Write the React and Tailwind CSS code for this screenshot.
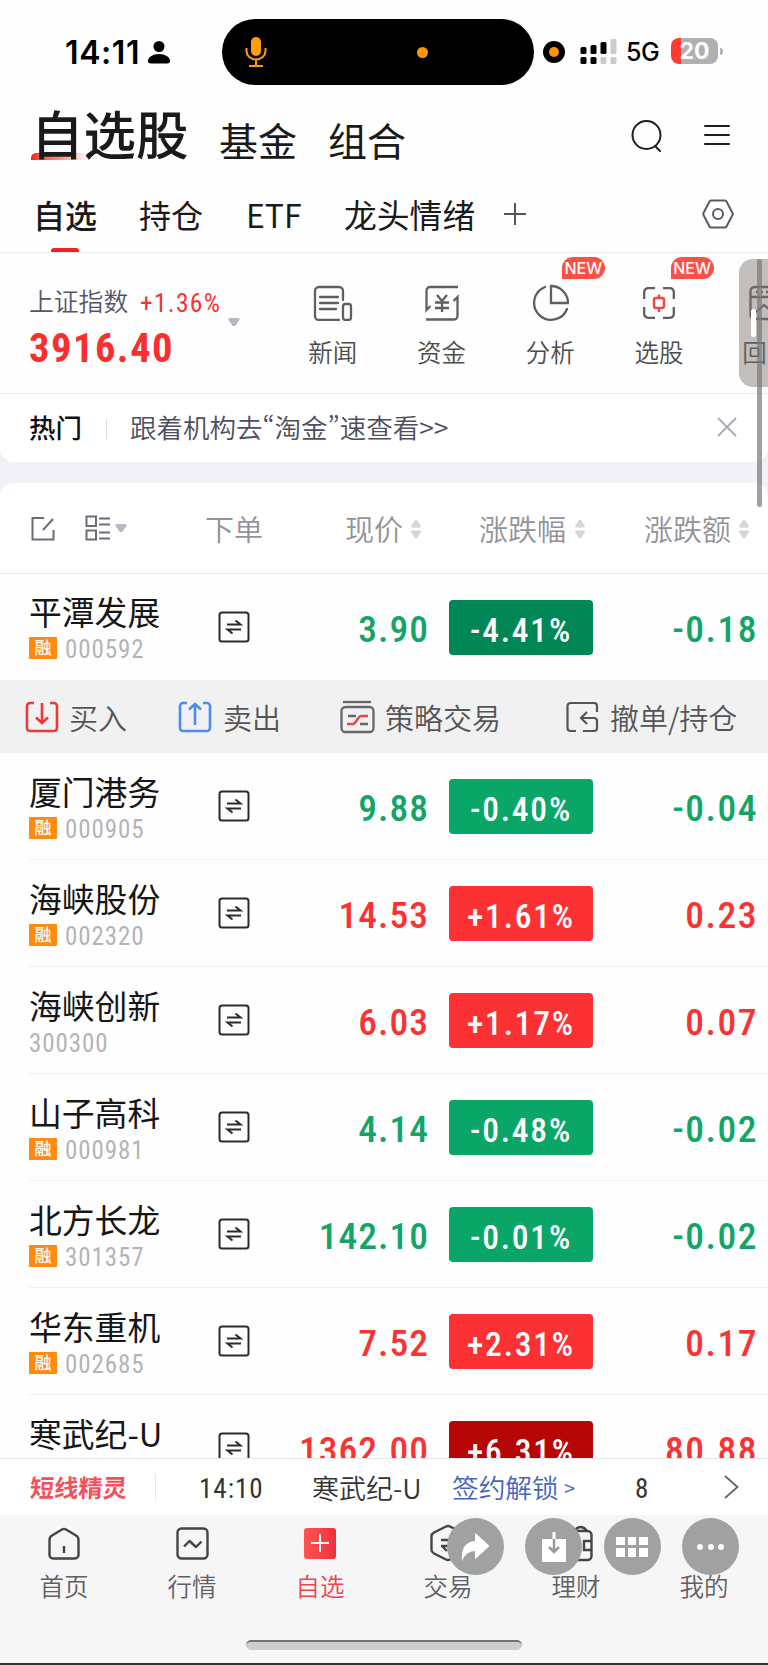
import { X } from 'lucide-react'

const NUM = "font-['Roboto','Noto_Sans_CJK_SC',sans-serif] font-stretch-semi-condensed"

const STOCKS = [
  { name: '厦门港务', code: '000905', margin: true, price: '9.88', pct: '-0.40%', diff: '-0.04' },
  { name: '海峡股份', code: '002320', margin: true, price: '14.53', pct: '+1.61%', diff: '0.23' },
  { name: '海峡创新', code: '300300', margin: false, price: '6.03', pct: '+1.17%', diff: '0.07' },
  { name: '山子高科', code: '000981', margin: true, price: '4.14', pct: '-0.48%', diff: '-0.02' },
  { name: '北方长龙', code: '301357', margin: true, price: '142.10', pct: '-0.01%', diff: '-0.02' },
  { name: '华东重机', code: '002685', margin: true, price: '7.52', pct: '+2.31%', diff: '0.17' },
]

// last row, cut by the flash bar
const LAST = { name: '寒武纪-U', price: '1362.00', pct: '+6.31%', diff: '80.88', tone: 'bg-[#b60606]' }

function Svg({ w, h, children, className = '', stroke = '#5f5f63', sw = 2 }) {
  return (
    <svg
      width={w}
      height={h}
      viewBox={`0 0 ${w} ${h}`}
      fill="none"
      stroke={stroke}
      strokeWidth={sw}
      className={`shrink-0 ${className}`}
    >
      {children}
    </svg>
  )
}

function StatusBar() {
  return (
    <div className="h-[104px] flex items-center pl-[65px]">
      <span className="w-[83px] pt-[2px] font-['Inter'] text-[32px] leading-none font-semibold tracking-[0.6px] text-black">14:11</span>
      <Svg w={22} h={23} stroke="none">
        <circle cx="11" cy="5.5" r="5.5" fill="#000" />
        <path d="M0 20C0 16 5 13 11 13S22 16 22 20Q22 22.500 19 22.500H3Q0 22.500 0 20Z" fill="#000" />
      </Svg>
      <div className="ml-[51.500px] w-[312.500px] h-[66px] rounded-full bg-black flex items-center pl-[23px]">
        <Svg w={22} h={32} stroke="#ff9d0a" sw={2}>
          <rect x="6" y="1" width="10" height="19" rx="5" fill="#ff9d0a" stroke="none" />
          <path d="M1.500 12v3a9.500 8.500 0 0 0 19 0v-3M11 24v5M4 30h14" />
        </Svg>
        <span className="ml-[150px] w-[11px] h-[11px] rounded-full bg-[#ff9500]" />
      </div>
      <span className="ml-[9px] w-[22px] h-[22px] rounded-full bg-black flex items-center justify-center">
        <span className="w-[10px] h-[10px] rounded-full bg-[#ff9500]" />
      </span>
      <Svg w={38} h={26} stroke="none" className="ml-[15px] -mt-[3px]">
        <g fill="#000">
          <rect x="0.500" y="9" width="6" height="7" rx="1.500" />
          <rect x="10.500" y="7" width="6" height="9" rx="1.500" />
          <rect x="20.500" y="4" width="6" height="12" rx="1.500" />
          <rect x="0.500" y="19" width="6" height="7" rx="1.500" />
          <rect x="10.500" y="19" width="6" height="7" rx="1.500" />
        </g>
        <g fill="#cbcbcb">
          <rect x="30.500" y="1" width="6" height="15" rx="1.500" />
          <rect x="20.500" y="19" width="6" height="7" rx="1.500" />
          <rect x="30.500" y="19" width="6" height="7" rx="1.500" />
        </g>
      </Svg>
      <span className="ml-[8px] w-[45px] pt-[1px] font-['Inter'] text-[25px] leading-none font-medium tracking-[-0.5px] text-black">5G</span>
      <div className="-mt-[2px] w-[47px] h-[26px] rounded-[8px] bg-linear-to-r from-[#ff3b30] from-21% to-[#b0b0b0] to-21% flex items-center justify-center">
        <span className="font-['Inter'] text-[23px] leading-none font-bold text-white">20</span>
      </div>
      <span className="ml-[2px] -mt-[2px] w-[3px] h-[7px] rounded-r-full bg-[#b4b4b4]" />
    </div>
  )
}

function TitleRow() {
  return (
    <div className="h-[60px] flex items-end pl-[31px] text-[#1a1a1a]">
      <h1 className="relative w-[188px] h-[54px] text-[52.500px] leading-[44px] font-medium">
        <span className="absolute left-0 bottom-[4px] w-[56px] h-[7px] rounded-tl-[5px] bg-linear-to-r from-[#f2230f] via-[#ff8870] to-transparent" />
        <span className="relative whitespace-nowrap">自选股</span>
      </h1>
      <span className="w-[109px] h-[54px] text-[39px] leading-[58px]">基金</span>
      <span className="w-[303px] h-[54px] text-[39px] leading-[58px]">组合</span>
      <Svg w={32} h={34} stroke="#1e1e1e" sw={2} className="mb-[11px]">
        <circle cx="15.500" cy="16" r="14" />
        <path d="M24 27l5 5" strokeLinecap="round" />
      </Svg>
      <Svg w={26} h={24} stroke="#1e1e1e" sw={2} className="ml-[41px] mb-[17px]">
        <path d="M1 3h24M1 12h24M1 21h24" strokeLinecap="round" />
      </Svg>
    </div>
  )
}

function Tabs() {
  return (
    <div className="h-[89px] flex items-center pl-[33px] border-b border-[#eceef0] text-[32px] leading-none text-[#1a1a1a]">
      <div className="relative w-[106px] h-full flex items-center pt-[11px]">
        <span className="font-medium">自选</span>
        <span className="absolute left-[18px] bottom-0 w-[28px] h-[4px] rounded-t-[3px] bg-[#ee2222]" />
      </div>
      <span className="w-[107px] pt-[11px]">持仓</span>
      <span className="w-[98px] pt-[11px]">ETF</span>
      <span className="w-[160px] pt-[13px] text-[32.800px]">龙头情绪</span>
      <Svg w={22} h={22} stroke="#555" sw={2} className="mt-[12px]">
        <path d="M11 0v22M0 11h22" />
      </Svg>
      <Svg w={32} h={30} stroke="#5a5a66" sw={2} className="ml-[176px] mt-[12px]">
        <path d="M9 1.500h14q1 0 1.500 1l6 11.500q.5 1 0 2l-6 11.500q-.5 1-1.500 1H9q-1 0-1.500-1l-6-11.500q-.5-1 0-2l6-11.500q.5-1 1.500-1z" />
        <circle cx="16" cy="15" r="5" />
      </Svg>
    </div>
  )
}

function NewsIcon() {
  return (
    <Svg w={40} h={36} sw={2.3}>
      <path d="M30 15V6a4 4 0 0 0-4-4H6a4 4 0 0 0-4 4v25a4 4 0 0 0 4 4h20M7 12h18M7 18h18M7 24h16" strokeLinecap="round" />
      <rect x="30" y="19" width="8" height="16" rx="2.500" />
    </Svg>
  )
}

function FundsIcon() {
  return (
    <Svg w={34} h={36} sw={2.3}>
      <path d="M33 2H5a3.500 3.500 0 0 0-3.500 3.500V25l4-4M1 34.500h28a3.500 3.500 0 0 0 3.500-3.500V12l-4 4" />
      <path d="M12 10l5 6 5-6M10 17.500h14M10 23h14M17 16v11" />
    </Svg>
  )
}

function PieIcon() {
  return (
    <Svg w={38} h={38} sw={2.3}>
      <path d="M14 3A17 17 0 1 0 36 25" strokeLinecap="round" />
      <path d="M20 2v17h17A17 17 0 0 0 20 2z" />
    </Svg>
  )
}

function PickIcon() {
  return (
    <Svg w={32} h={32} sw={2.3}>
      <path d="M12 1.200H5a3.800 3.800 0 0 0-3.800 3.800v7M20 1.200h7a3.800 3.800 0 0 1 3.800 3.800v7M30.800 20v7a3.800 3.800 0 0 1-3.800 3.800h-7M12 30.800H5a3.800 3.800 0 0 1-3.800-3.800v-7" />
      <rect x="11" y="11" width="10" height="10" rx="2" stroke="#f04848" strokeWidth="2.500" />
      <path d="M16 7.500v4M16 21v4" stroke="#f04848" strokeWidth="2.500" />
    </Svg>
  )
}

function ReplayIcon() {
  return (
    <Svg w={36} h={36} sw={2.3}>
      <rect x="1.500" y="2" width="33" height="32" rx="4" />
      <path d="M1 12h34M7 27l8-7 6 5 8-7" />
      <path d="M7 7h20" strokeDasharray="2 3" />
    </Svg>
  )
}

function Shortcut({ label, icon, isNew = false }) {
  return (
    <div className="relative w-[108.700px] shrink-0 flex flex-col items-center">
      <div className="h-[38px] flex items-center justify-center">{icon}</div>
      <span className="mt-[16px] text-[24.500px] leading-[28px] font-[350] text-[#4c4c4c]">{label}</span>
      {isNew && (
        <span className="absolute left-[66px] -top-[27px] w-[43px] h-[22px] rounded-[11px] rounded-bl-none bg-[#fb5046] font-['Inter'] text-[16px] leading-[23px] font-medium text-center text-white">
          NEW
        </span>
      )}
    </div>
  )
}

function IndexStrip() {
  return (
    <div className="h-[141px] flex border-b border-[#ebebed] overflow-hidden">
      <div className="w-[278.500px] shrink-0 pl-[29px] pt-[34px]">
        <div className="flex items-center h-[27px]">
          <span className="w-[111px] text-[24.800px] leading-none font-[350] text-[#55556a]">上证指数</span>
          <span className={`${NUM} text-[25.500px] leading-none pt-[7px] tracking-[1.3px] text-[#f53333]`}>+1.36%</span>
        </div>
        <div className="flex">
          <span className={`${NUM} w-[199px] pt-[10px] text-[40.500px] leading-[48px] font-bold tracking-[1.500px] text-[#f92f2f]`}>3916.40</span>
          <span className="mt-[4px] w-[12px] h-[8px] bg-[#b9b9c6] [clip-path:polygon(0_15%,15%_0,85%_0,100%_15%,60%_100%,40%_100%)]" />
        </div>
      </div>
      <div className="flex pt-[31px]">
        <Shortcut label="新闻" icon={<NewsIcon />} />
        <Shortcut label="资金" icon={<FundsIcon />} />
        <Shortcut label="分析" icon={<PieIcon />} isNew />
        <Shortcut label="选股" icon={<PickIcon />} isNew />
        {/* partly scrolled out on the right */}
        <div className="shrink-0 flex flex-col items-start pl-[36px]">
          <div className="h-[38px] flex items-center"><ReplayIcon /></div>
          <span className="mt-[16px] -ml-[7px] text-[24.500px] leading-[28px] font-[350] text-[#4c4c4c]">回</span>
        </div>
      </div>
    </div>
  )
}

function HotNotice() {
  return (
    <div className="h-[68px] flex items-center pl-[29px] pb-[2px] bg-white rounded-b-[14px]">
      <span className="w-[77px] text-[26.500px] leading-none font-medium text-[#111]">热门</span>
      <span className="mt-[4px] w-px h-[20px] bg-[#dcdce2]" />
      <span className="ml-[23px] w-[586px] text-[26.500px] leading-none font-[350] text-[#4e4e60] [font-feature-settings:'pwid']">
        跟着机构去“淘金”速查看&gt;&gt;
      </span>
      <X size={34} strokeWidth={1.3} color="#a9a9b6" className="-ml-[6px]" />
    </div>
  )
}

function SortArrows({ className = '' }) {
  return (
    <Svg w={10} h={20} stroke="none" className={className}>
      <path d="M0 7l4-6q1-1 2 0l4 6q0 1.500-1 1.500H1Q0 8.500 0 7zM0 13l4 6q1 1 2 0l4-6q0-1.500-1-1.500H1Q0 11.500 0 13z" fill="#d6d6da" />
    </Svg>
  )
}

function ListHeader() {
  return (
    <div className="h-[91px] flex items-center pl-[31px] bg-white rounded-t-[14px] border-b border-[#ececee] text-[29px] leading-none font-[350] text-[#929298]">
      <Svg w={24} h={25} stroke="#6c6c76">
        <path d="M13 2H1.500v21.500h21V14M12 14L22 3" />
      </Svg>
      <Svg w={25} h={26} stroke="#6c6c76" className="ml-[30px]">
        <path d="M1.500 1.500h9.500v9.500h-9.500zM1.500 15.500h9.500v9h-9.500zM14 3.500h11M14 9.500h11M14 17.500h11M14 23.500h11" />
      </Svg>
      <span className="ml-[5px] w-[12px] h-[8px] bg-[#b9b9c6] [clip-path:polygon(0_15%,15%_0,85%_0,100%_15%,60%_100%,40%_100%)]" />
      <span className="ml-[78px] w-[140px]">下单</span>
      <span className="w-[66px]">现价</span>
      <SortArrows className="mt-[2px]" />
      <span className="ml-[58px] w-[96px]">涨跌幅</span>
      <SortArrows className="mt-[2px]" />
      <span className="ml-[59px] w-[95px]">涨跌额</span>
      <SortArrows className="mt-[2px]" />
    </div>
  )
}

function SwapIcon() {
  return (
    <Svg w={32} h={32} stroke="#2a2a2a">
      <rect x="1.500" y="1.500" width="29" height="29" rx="2.500" />
      <path d="M9 13.500h13.500l-5-4M23 18.500H9.500l5 4" />
    </Svg>
  )
}

function StockRow({ stock, border = true }) {
  const up = !stock.diff.startsWith('-')
  const text = up ? 'text-[#f93333]' : 'text-[#12a566]'
  const fill = stock.tone ?? (up ? 'bg-[#fb3133]' : 'bg-[#09a667]')
  return (
    <div className={`ml-[29px] flex items-center shrink-0 ${border ? 'h-[107px] border-b border-[#f1f1f3]' : 'h-[106px]'}`}>
      <div className={`w-[189px] h-full ${border ? 'pt-[21px]' : 'pt-[20px]'}`}>
        <div className="text-[32.800px] leading-[33px] text-[#161616]">{stock.name}</div>
        {stock.code && (
          <div className="mt-[9px] flex items-center h-[23px]">
            {stock.margin && (
              <span className="mr-[8px] w-[28px] h-[22px] rounded-[1px] bg-[#ff8a12] text-center text-[17px] leading-[20px] font-medium text-white">融</span>
            )}
            <span className={`${NUM} text-[25px] leading-none pt-[3px] tracking-[0.9px] text-[#b4b4b8]`}>{stock.code}</span>
          </div>
        )}
      </div>
      <SwapIcon />
      <span className={`${NUM} w-[179px] pt-[6px] text-right text-[37.500px] leading-none font-medium tracking-[1px] ${text}`}>{stock.price}</span>
      <span className={`${NUM} ml-[20px] w-[144px] h-[55px] pt-[4px] rounded-[4px] text-center text-[33.500px] leading-[53px] font-medium tracking-[1.800px] text-white ${fill}`}>
        {stock.pct}
      </span>
      <span className={`${NUM} w-[165px] pt-[6px] text-right text-[37.500px] leading-none font-medium tracking-[1.500px] ${text}`}>{stock.diff}</span>
    </div>
  )
}

function ActionBar() {
  return (
    <div className="h-[73px] flex items-center pl-[25px] bg-[#f1f1f1] text-[29px] leading-none font-[350] text-[#555]">
      <Svg w={34} h={32} stroke="#e93a3a" sw={2.6}>
        <path d="M9 2H5a3 3 0 0 0-3 3v22a3 3 0 0 0 3 3h24a3 3 0 0 0 3-3V5a3 3 0 0 0-3-3h-4M17 2v20M11 16.500l6 5.500 6-5.500" />
      </Svg>
      <span className="ml-[10px] w-[109px] pt-px">买入</span>
      <Svg w={34} h={32} stroke="#4b8df2" sw={2.6}>
        <path d="M9 2H5a3 3 0 0 0-3 3v22a3 3 0 0 0 3 3h24a3 3 0 0 0 3-3V5a3 3 0 0 0-3-3h-4M17 24V3M11 8.500L17 3l6 5.500" />
      </Svg>
      <span className="ml-[11px] w-[117px] pt-px">卖出</span>
      <Svg w={35} h={34} stroke="#66666a" sw={2.3}>
        <path d="M3 2h28" />
        <rect x="1.500" y="7" width="32" height="25" rx="4" />
        <path d="M8 16h8M20 24h8" />
        <path d="M7 24h6c3 0 5-8 8-8h7" stroke="#ef4444" strokeWidth="2.400" />
      </Svg>
      <span className="ml-[10px] w-[181px] pt-px">策略交易</span>
      <Svg w={33} h={32} stroke="#55555a" sw={2.2}>
        <path d="M10 30H4.500a3 3 0 0 1-3-3V5a3 3 0 0 1 3-3H28a3 3 0 0 1 3 3v6M17 30h11a3 3 0 0 0 3-3v-7a3 3 0 0 0-3-3H15M21 11l-6 6 6 6" />
      </Svg>
      <span className="ml-[11px] pt-px whitespace-nowrap">撤单/持仓</span>
    </div>
  )
}

function FlashBar() {
  return (
    <div className="h-[57px] flex items-center pl-[30px] border-t border-[#e6e6e8] bg-white leading-none text-[#333]">
      <span className="w-[125px] text-[24.300px] font-bold text-[#f4505a]"><span className="inline-block -skew-x-3">短线精灵</span></span>
      <span className="w-px h-[27px] bg-[#e6e6e8]" />
      <span className={`${NUM} ml-[43px] w-[113px] pt-[4px] text-[27px] tracking-[1px]`}>14:10</span>
      <span className="w-[140px] text-[27px] font-[350]">寒武纪-U</span>
      <span className="text-[26.700px] w-[112px] font-[350] text-[#4565bd]">签约解锁</span>
      <span className="w-[71px] pt-[2px] text-[20px] text-[#4a69c0]">&gt;</span>
      <span className={`${NUM} w-[89px] pt-[4px] text-[27px]`}>8</span>
      <Svg w={16} h={26} stroke="#66666a" sw={1.8}>
        <path d="M1 2l12.500 11L1 24" />
      </Svg>
    </div>
  )
}

function NavItem({ label, icon, active = false }) {
  return (
    <div className="w-[128px] flex flex-col items-center">
      <div className="h-[38px] flex items-center">{icon}</div>
      <span className={`mt-[10px] text-[24.500px] leading-[28px] font-[350] ${active ? 'text-[#f0444e]' : 'text-[#606064]'}`}>{label}</span>
    </div>
  )
}

function BottomNav() {
  return (
    <div className="h-[148px] pt-[9px] flex flex-col items-center justify-between bg-[#f6f6f7]">
      <div className="flex">
        <NavItem
          label="首页"
          icon={
            <Svg w={32} h={33} stroke="#444" sw={2.4}>
              <path d="M14 2.500L4 8.500Q1.500 10 1.500 13v15a3.500 3.500 0 0 0 3.500 3.500h22a3.500 3.500 0 0 0 3.500-3.500V13q0-3-2.500-4.500l-10-6q-2-1.200-4 0zM16 19v7" />
            </Svg>
          }
        />
        <NavItem
          label="行情"
          icon={
            <Svg w={33} h={33} stroke="#444" sw={2.4}>
              <rect x="1.500" y="1.500" width="30" height="30" rx="4" />
              <path d="M8 19.500L13.500 14l6.500 6 5.500-5.500" strokeLinejoin="round" />
            </Svg>
          }
        />
        <NavItem
          label="自选"
          active
          icon={
            <div className="w-[32px] h-[31px] rounded-[3px] bg-linear-to-r from-[#ff5550] to-[#ee2f3d] flex items-center justify-center">
              <Svg w={18} h={18} stroke="#fff" sw={2}>
                <path d="M9 0v18M0 9h18" />
              </Svg>
            </div>
          }
        />
        <NavItem
          label="交易"
          icon={
            <Svg w={36} h={38} stroke="#444" sw={2.4}>
              <path d="M16 2.500L4 8.500Q1.500 10 1.500 12v14q0 2 2.500 3.500l12 6q2 1 4 0l12-6q2.500-1.500 2.500-3.500V12q0-2-2.500-3.500l-12-6q-2-1-4 0zM11 16h14M11 22h14M12 22l5 5" />
            </Svg>
          }
        />
        <NavItem
          label="理财"
          icon={
            <Svg w={36} h={37} stroke="#444" sw={2.4}>
              <rect x="1.500" y="6" width="32" height="29" rx="4" />
              <path d="M16 6q7-8 13 0M34 16h-8v9h8" />
            </Svg>
          }
        />
        <NavItem
          label="我的"
          icon={
            <Svg w={34} h={36} stroke="#444" sw={2.4}>
              <circle cx="17" cy="12" r="8" />
              <path d="M3 34q2-12 14-12t14 12z" />
            </Svg>
          }
        />
      </div>
      <div className="mb-[13px] w-[276px] h-[10px] rounded-full bg-[#cecece] border-t-2 border-[#737373]" />
    </div>
  )
}

function RoundButton({ children }) {
  return <div className="w-[57px] h-[57px] rounded-full bg-[#a1a1a1] flex items-center justify-center">{children}</div>
}

// viewer controls floating over the bottom nav
function ViewerControls() {
  return (
    <div className="absolute left-[446.500px] top-[1518px] flex gap-[21.500px]">
      <RoundButton>
        <Svg w={28} h={28} stroke="none">
          <path d="M1 28C0 14 5 9 14 8V1q0-1.500 1.500 0l12 11q1 1 0 2l-12 11q-1.500 1.500-1.500 0v-7Q5 18 1 28z" fill="#fff" />
        </Svg>
      </RoundButton>
      <RoundButton>
        <Svg w={26} h={32} stroke="none">
          <path d="M1 8h24v23H1z" fill="#fff" />
          <path d="M11.500 1h3v7h-3z" fill="#fff" />
          <path d="M13 8v13M8 16l5 5 5-5" stroke="#9a9a9a" strokeWidth="2.500" />
        </Svg>
      </RoundButton>
      <RoundButton>
        <div className="grid grid-cols-3 gap-[3px]">
          {[0, 1, 2, 3, 4, 5].map(i => <span key={i} className="w-[8.500px] h-[8.500px] bg-white" />)}
        </div>
      </RoundButton>
      <RoundButton>
        <div className="flex gap-[4.500px]">
          {[0, 1, 2].map(i => <span key={i} className="w-[6px] h-[6px] rounded-full bg-white" />)}
        </div>
      </RoundButton>
    </div>
  )
}

export default function App() {
  return (
    <div className="relative w-[768px] h-[1665px] overflow-hidden bg-[#fefefe] font-['Noto_Sans_CJK_SC',sans-serif]">
      <StatusBar />
      <TitleRow />
      <Tabs />
      <IndexStrip />
      <div className="flex flex-col gap-[21px] bg-[#f1f1f7]">
        <HotNotice />
        <ListHeader />
      </div>
      <StockRow
        border={false}
        stock={{ name: '平潭发展', code: '000592', margin: true, price: '3.90', pct: '-4.41%', diff: '-0.18', tone: 'bg-[#008755]' }}
      />
      <ActionBar />
      <div className="h-[705px] flex flex-col overflow-hidden">
        {STOCKS.map(stock => <StockRow key={stock.code} stock={stock} />)}
        <StockRow stock={LAST} />
      </div>
      <FlashBar />
      <BottomNav />
      <div className="h-[2px] bg-[#333]" />

      {/* side handle and scroll thumb */}
      <div className="absolute left-[739px] top-[259px] w-[40px] h-[128px] rounded-[14px] bg-[#77706a]/45">
        <span className="absolute left-[12px] top-[50px] w-[5px] h-[28px] rounded-full bg-white" />
      </div>
      <div className="absolute left-[757px] top-[259px] w-[5px] h-[248px] rounded-full bg-[#77777a]/70" />
      <ViewerControls />
    </div>
  )
}
